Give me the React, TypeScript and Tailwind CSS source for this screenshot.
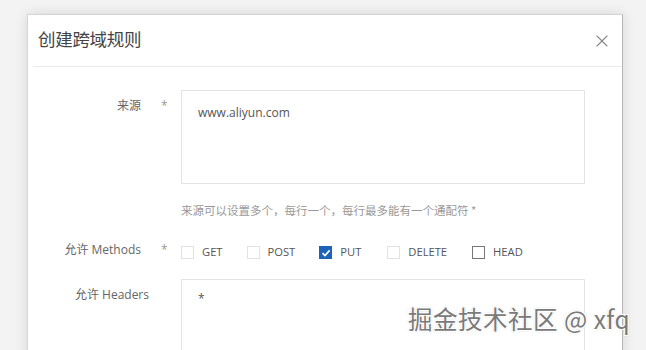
import { X } from "lucide-react";

const methods = [
  { name: "GET", checked: false, border: "border-[#e2e2e2]", gap: "mr-[24px]" },
  { name: "POST", checked: false, border: "border-[#e2e2e2]", gap: "mr-[24px]" },
  { name: "PUT", checked: true, border: "border-[#1d64b8]", gap: "mr-[26px]" },
  { name: "DELETE", checked: false, border: "border-[#e2e2e2]", gap: "mr-[25px]" },
  { name: "HEAD", checked: false, border: "border-[#777]", gap: "" },
];

function Checkbox({ checked, border }: { checked: boolean; border: string }) {
  return (
    <span
      className={`w-[13px] h-[13px] border ${border} flex items-center justify-center ${
        checked ? "bg-[#1d64b8]" : "bg-white"
      }`}
    >
      {checked && (
        <svg width="10" height="10" viewBox="0 0 10 10">
          <path d="M1.5 5.2 L4 7.6 L8.6 2.4" fill="none" stroke="#fff" strokeWidth="1.6" />
        </svg>
      )}
    </span>
  );
}

export default function App() {
  return (
    <main className="relative w-[646px] h-[350px] overflow-hidden bg-[#f3f3f3] pt-[14px] pl-[27px] font-['Open_Sans','Noto_Sans_CJK_SC',sans-serif]">
      <div className="w-[596px] h-[360px] bg-white border border-[#d4d4d4] border-r-[#b8b8b8] shadow-[0_0_12px_rgba(0,0,0,0.12)]">
        <header className="flex items-center justify-between h-[52px] ml-[5px] border-b border-[#eaeaea] pl-[5px] pr-[10px]">
          <span className="text-[17.5px] text-[#444] tracking-[-0.3px] -mt-[3px] font-['Noto_Sans_CJK_SC',sans-serif]">
            创建跨域规则
          </span>
          <X size={20} strokeWidth={1.3} className="text-[#888]" />
        </header>

        <div className="pt-[23px]">
          <div className="flex">
            <div className="w-[153px] flex pt-[7px] text-[12px] text-[#666]">
              <span className="w-[113px] text-right">来源</span>
              <span className="ml-[20px] text-[#999]">*</span>
            </div>
            <div className="w-[404px] h-[94px] border border-[#e4e4e4] pl-[16px] pt-[13px] text-[12px] text-[#555]">
              www.aliyun.com
            </div>
          </div>

          <div className="ml-[153px] mt-[18px] text-[11.5px] text-[#999] font-['Noto_Sans_CJK_SC',sans-serif]">
            来源可以设置多个，每行一个，每行最多能有一个通配符 *
          </div>

          <div className="flex items-center mt-[25px]">
            <div className="w-[153px] flex text-[12px] text-[#666] -mt-[6px]">
              <span className="w-[113px] text-right">允许 Methods</span>
              <span className="ml-[20px] text-[#999]">*</span>
            </div>
            <div className="flex items-center text-[11.2px] text-[#555]">
              {methods.map((m) => (
                <label key={m.name} className={`flex items-center gap-[8px] ${m.gap}`}>
                  <Checkbox checked={m.checked} border={m.border} />
                  <span>{m.name}</span>
                </label>
              ))}
            </div>
          </div>

          <div className="flex mt-[18px]">
            <div className="w-[153px] pt-[7px] pr-[32px] text-right text-[12px] text-[#666]">
              允许 Headers
            </div>
            <div className="w-[404px] h-[100px] border border-[#e4e4e4] pl-[16px] pt-[10px] text-[12px] text-[#555]">
              *
            </div>
          </div>
        </div>
      </div>

      <div className="absolute left-[408px] top-[303px] text-[24.5px] leading-[32px] tracking-[0.5px] text-[#7a7a7a] font-['Noto_Sans_CJK_SC',sans-serif] [text-shadow:1px_1px_0_#fff,-1px_-1px_0_#fff,1px_-1px_0_#fff,-1px_1px_0_#fff,0_0_2px_#555]">
        掘金技术社区 @ xfq
      </div>
    </main>
  );
}
